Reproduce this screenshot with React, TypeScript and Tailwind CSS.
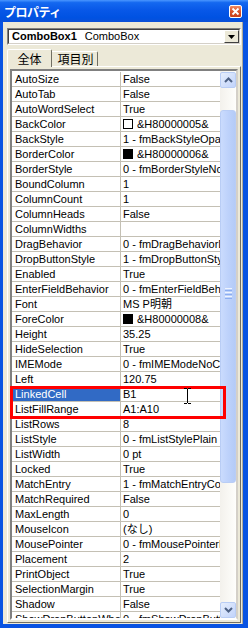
import React from "react";

type Row = { n: string; v: string; sw?: "white" | "black" };

const rows: Row[] = [
  { n: "AutoSize", v: "False" },
  { n: "AutoTab", v: "False" },
  { n: "AutoWordSelect", v: "True" },
  { n: "BackColor", v: "&H80000005&", sw: "white" },
  { n: "BackStyle", v: "1 - fmBackStyleOpaque" },
  { n: "BorderColor", v: "&H80000006&", sw: "black" },
  { n: "BorderStyle", v: "0 - fmBorderStyleNone" },
  { n: "BoundColumn", v: "1" },
  { n: "ColumnCount", v: "1" },
  { n: "ColumnHeads", v: "False" },
  { n: "ColumnWidths", v: "" },
  { n: "DragBehavior", v: "0 - fmDragBehaviorDisabled" },
  { n: "DropButtonStyle", v: "1 - fmDropButtonStyleArrow" },
  { n: "Enabled", v: "True" },
  { n: "EnterFieldBehavior", v: "0 - fmEnterFieldBehaviorSelectAll" },
  { n: "Font", v: "MS P明朝" },
  { n: "ForeColor", v: "&H80000008&", sw: "black" },
  { n: "Height", v: "35.25" },
  { n: "HideSelection", v: "True" },
  { n: "IMEMode", v: "0 - fmIMEModeNoControl" },
  { n: "Left", v: "120.75" },
  { n: "LinkedCell", v: "B1" },
  { n: "ListFillRange", v: "A1:A10" },
  { n: "ListRows", v: "8" },
  { n: "ListStyle", v: "0 - fmListStylePlain" },
  { n: "ListWidth", v: "0 pt" },
  { n: "Locked", v: "True" },
  { n: "MatchEntry", v: "1 - fmMatchEntryComplete" },
  { n: "MatchRequired", v: "False" },
  { n: "MaxLength", v: "0" },
  { n: "MouseIcon", v: "(なし)" },
  { n: "MousePointer", v: "0 - fmMousePointerDefault" },
  { n: "Placement", v: "2" },
  { n: "PrintObject", v: "True" },
  { n: "SelectionMargin", v: "True" },
  { n: "Shadow", v: "False" },
  { n: "ShowDropButtonWhen", v: "0 - fmShowDropButtonWhenNever" },
];

const font = { fontFamily: '"Liberation Sans", "Noto Sans CJK JP", sans-serif' };

export default function App() {
  return (
    <div
      className="relative w-[248px] h-[628px] overflow-hidden bg-[#0853e2] flex flex-col text-black"
      style={font}
    >
      {/* Title bar */}
      <div className="h-[22px] shrink-0 flex items-center justify-between pl-[4px] pr-[6px] bg-[linear-gradient(to_bottom,#4a96ff_0%,#1468f0_12%,#0858e8_45%,#0052e2_80%,#0a50d8_100%)]">
        <span
          className="text-white font-bold text-[12px] tracking-[-0.5px] pt-[1px]"
          style={{ fontFamily: '"Noto Sans CJK JP", sans-serif' }}
        >
          プロパティ
        </span>
        <div className="w-[13px] h-[13px] rounded-[2px] border border-white bg-[linear-gradient(to_bottom,#f08a62,#d9532a_50%,#c8401a)] flex items-center justify-center">
          <svg width="9" height="9" viewBox="0 0 9 9">
            <path d="M1.5 1.5 L7.5 7.5 M7.5 1.5 L1.5 7.5" stroke="white" strokeWidth="1.8" />
          </svg>
        </div>
      </div>

      {/* Body */}
      <div className="ml-[3px] mr-[5px] mb-[4px] flex-1 min-h-0 bg-[#ece9d8] border-r border-[#aca899] flex flex-col px-[4px] pt-[6px] pb-[1px]">
        {/* Combobox */}
        <div className="h-[17px] shrink-0 w-[234px] flex border border-t-[#808080] border-l-[#808080] border-b-white border-r-white">
          <div className="flex-1 bg-white flex items-center pl-[3px] border border-t-[#404040] border-l-[#404040] border-b-[#d4d0c8] border-r-[#d4d0c8] text-[11px] leading-none">
            <span className="font-bold">ComboBox1</span>
            <span className="ml-[8px]">ComboBox</span>
            <div className="ml-auto w-[15px] h-[13px] bg-[#ece9d8] border border-t-white border-l-white border-b-[#404040] border-r-[#404040] flex items-center justify-center">
              <svg width="7" height="4" viewBox="0 0 7 4">
                <path d="M0 0 H7 L3.5 4 Z" fill="black" />
              </svg>
            </div>
          </div>
        </div>

        {/* Tabs */}
        <div
          className="mt-[4px] h-[17px] shrink-0 flex items-end relative z-10"
          style={{ fontFamily: '"Noto Sans CJK JP", sans-serif' }}
        >
          <div className="h-[18px] -mb-[1px] w-[45px] bg-[#ece9d8] border-l border-t border-white border-r border-r-[#716f64] rounded-t-[2px] flex items-center justify-center text-[12px] leading-none">
            全体
          </div>
          <div className="h-[15px] w-[46px] border-t border-white border-r border-r-[#716f64] rounded-tr-[2px] flex items-center justify-center text-[12px] leading-none pl-[2px]">
            項目別
          </div>
        </div>

        {/* Panel */}
        <div className="flex-1 min-h-0 w-[234px] border border-t-white border-l-white border-r-[#716f64] border-b-[#716f64] p-[2px] flex flex-col">
          {/* Grid */}
          <div className="flex-1 min-h-0 border-2 border-t-[#808080] border-l-[#808080] border-b-white border-r-[#d4d0c8] flex overflow-hidden bg-white">
            <div className="w-[208px] flex flex-col overflow-hidden pt-[1px]">
              {rows.map((r) => {
                const sel = r.n === "LinkedCell";
                return (
                  <div key={r.n} className="h-[15px] shrink-0 flex border-b border-[#c4c0b4] text-[11px] leading-[14px]">
                    <div
                      className={
                        "w-[109px] shrink-0 border-r border-[#c4c0b4] pl-[3px] whitespace-nowrap overflow-hidden " +
                        (sel ? "bg-[#316ac5] text-white" : "")
                      }
                    >
                      {r.n}
                    </div>
                    <div className="flex-1 pl-[2px] whitespace-nowrap overflow-hidden flex items-center">
                      {r.sw && (
                        <span
                          className={
                            "inline-block w-[10px] h-[10px] mr-[4px] border border-black shrink-0 " +
                            (r.sw === "black" ? "bg-black" : "bg-white")
                          }
                        />
                      )}
                      <span>{r.v}</span>
                    </div>
                  </div>
                );
              })}
            </div>
            {/* Scrollbar */}
            <div className="w-[16px] shrink-0 flex flex-col bg-[linear-gradient(to_right,#f3f1ec,#fefefb)] pt-[1px]">
              <div className="h-[16px] shrink-0 rounded-[2px] border border-[#b9cdf5] bg-[linear-gradient(to_bottom_right,#e6eefc,#c1d3fb)] flex items-center justify-center">
                <svg width="9" height="6" viewBox="0 0 9 6">
                  <path d="M1 5 L4.5 1.5 L8 5" stroke="#4d6185" strokeWidth="2" fill="none" />
                </svg>
              </div>
              <div className="h-[22px] shrink-0" />
              <div className="h-[373px] shrink-0 rounded-[3px] border border-[#b9cdf5] bg-[linear-gradient(to_right,#cadbfd,#bed2fb_50%,#b4cbf7)] flex items-center justify-center">
                <div className="flex flex-col gap-[1px] mt-[-6px]">
                  <div className="w-[7px] h-[1px] bg-[#eef4fe]" />
                  <div className="w-[7px] h-[1px] bg-[#8caef0]" />
                  <div className="w-[7px] h-[1px] bg-[#eef4fe]" />
                  <div className="w-[7px] h-[1px] bg-[#8caef0]" />
                  <div className="w-[7px] h-[1px] bg-[#eef4fe]" />
                  <div className="w-[7px] h-[1px] bg-[#8caef0]" />
                </div>
              </div>
              <div className="flex-1 min-h-0" />
              <div className="h-[16px] shrink-0 rounded-[2px] border border-[#b9cdf5] bg-[linear-gradient(to_bottom_right,#e6eefc,#c1d3fb)] flex items-center justify-center">
                <svg width="9" height="6" viewBox="0 0 9 6">
                  <path d="M1 1 L4.5 4.5 L8 1" stroke="#4d6185" strokeWidth="2" fill="none" />
                </svg>
              </div>
            </div>
          </div>
        </div>
      </div>

      {/* Red annotation box */}
      <div className="absolute left-[10px] top-[386px] w-[216px] h-[33px] border-[3px] border-[#ff0000] pointer-events-none" />

      {/* I-beam cursor */}
      <svg className="absolute left-[184px] top-[388px]" width="7" height="16" viewBox="0 0 7 16">
        <path d="M0 0.5 H3 M4 0.5 H7 M3.5 1 V15 M0 15.5 H3 M4 15.5 H7" stroke="black" strokeWidth="1" fill="none" />
      </svg>
    </div>
  );
}
